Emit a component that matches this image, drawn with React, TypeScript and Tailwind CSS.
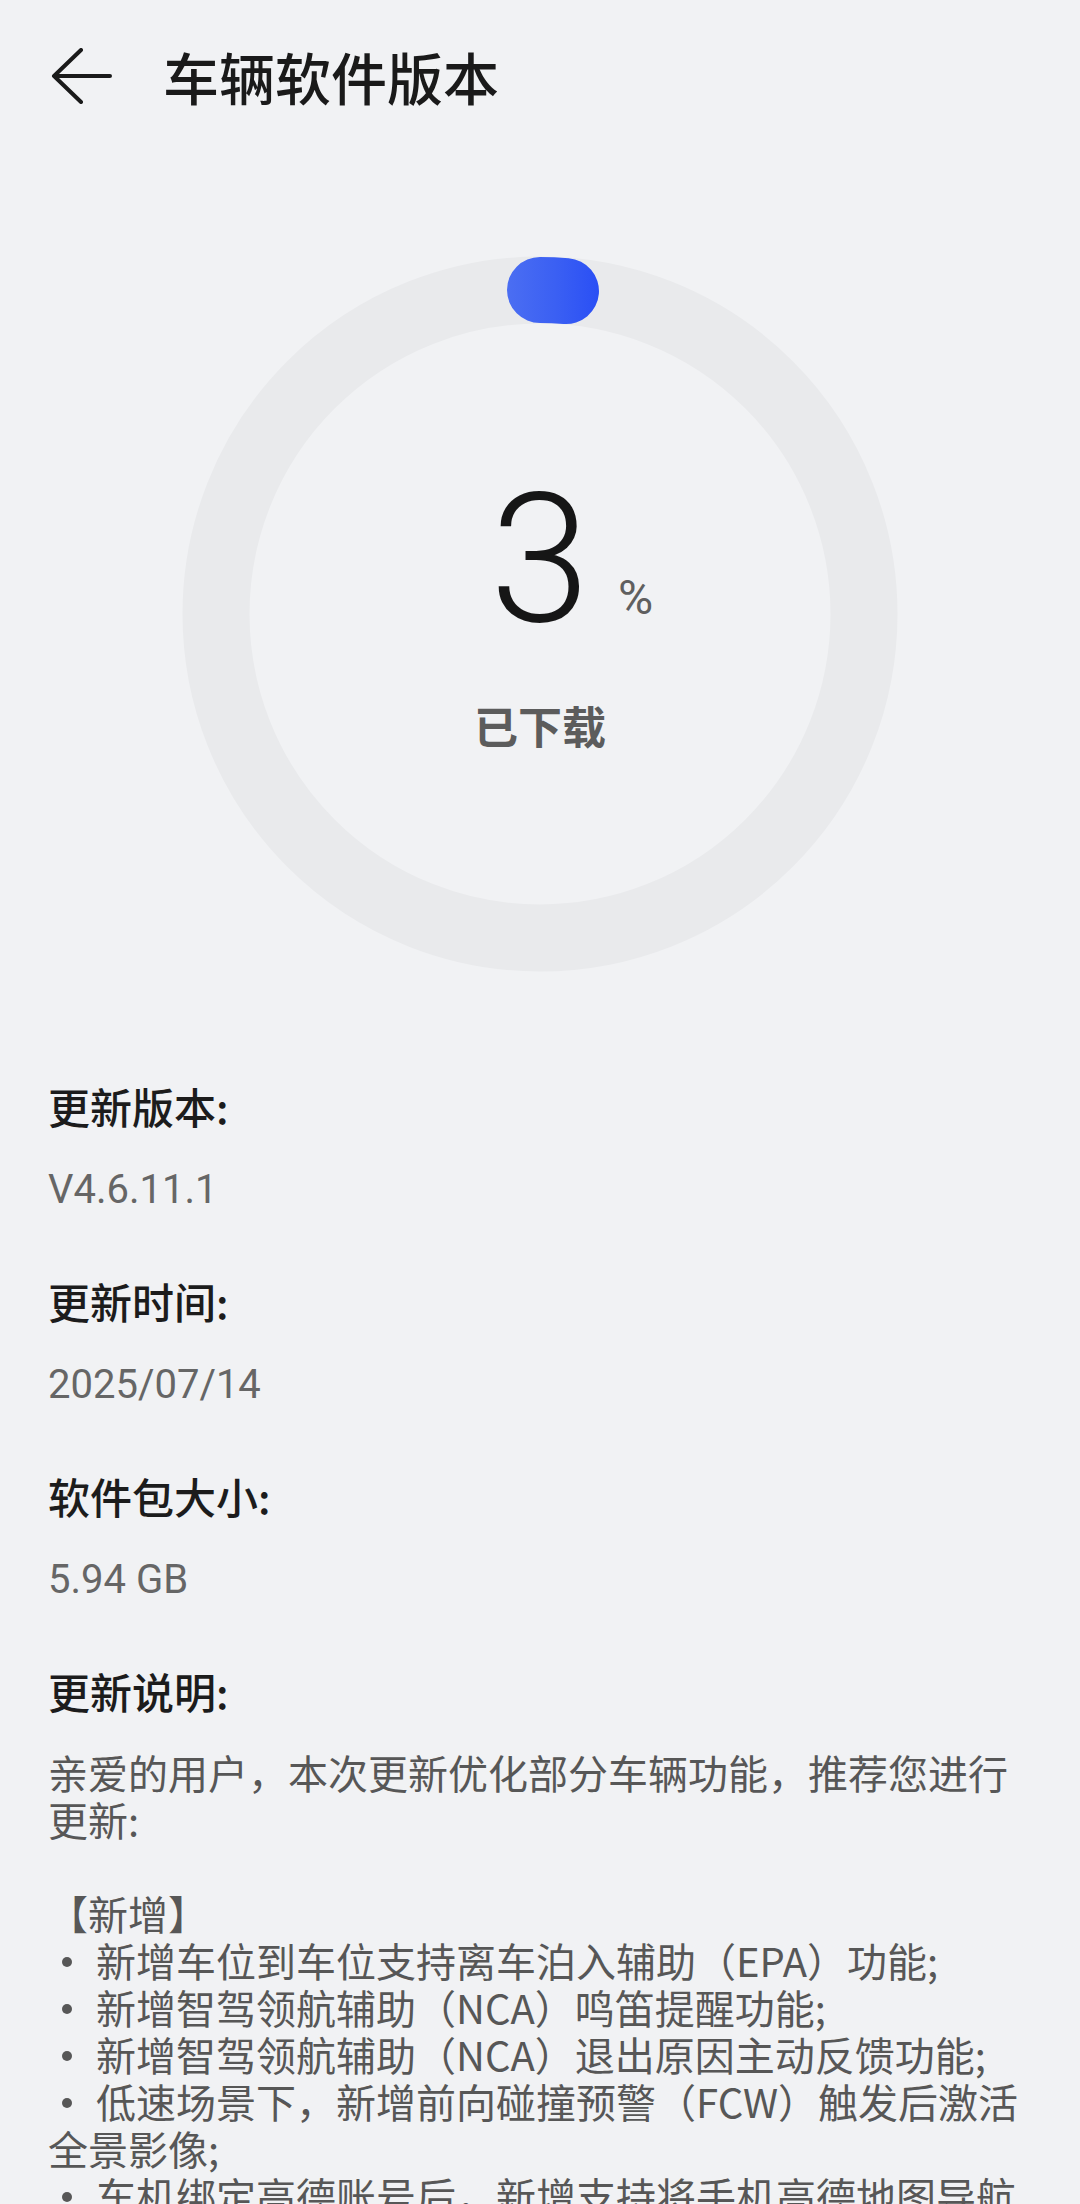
import React from "react";

const cjk = { fontFamily: '"Noto Sans CJK SC", "Noto Sans", sans-serif' };
const num = { fontFamily: 'Roboto, "Noto Sans CJK SC", sans-serif' };

const infoRows = [
  { label: "更新版本:", value: "V4.6.11.1" },
  { label: "更新时间:", value: "2025/07/14" },
  { label: "软件包大小:", value: "5.94 GB" },
];

const bullets = [
  "新增车位到车位支持离车泊入辅助（EPA）功能;",
  "新增智驾领航辅助（NCA）鸣笛提醒功能;",
  "新增智驾领航辅助（NCA）退出原因主动反馈功能;",
  "低速场景下，新增前向碰撞预警（FCW）触发后激活全景影像;",
  "车机绑定高德账号后，新增支持将手机高德地图导航信息流转至车机;",
];

function BackArrow() {
  return (
    <svg width="61" height="56" viewBox="0 0 61 56" fill="none">
      <path
        d="M30 2 L3 28 L30 54 M3 28 H59"
        stroke="#1a1a1a"
        strokeWidth="4"
        strokeLinecap="round"
        strokeLinejoin="round"
      />
    </svg>
  );
}

function ProgressRing() {
  // knob arc: from top, ~4.6deg clockwise
  const r = 324;
  const c = 358;
  const a = (4.6 * Math.PI) / 180;
  const ex = c + r * Math.sin(a);
  const ey = c - r * Math.cos(a);
  const d = `M${c} ${c - r} A${r} ${r} 0 0 1 ${ex} ${ey}`;
  return (
    <svg className="absolute inset-0" width="716" height="716" viewBox="0 0 716 716">
      <defs>
        <linearGradient id="knob" gradientUnits="userSpaceOnUse" x1="325" y1="0" x2="417" y2="0">
          <stop offset="0" stopColor="#4b6ef2" />
          <stop offset="0.55" stopColor="#3a5ff3" />
          <stop offset="1" stopColor="#2a4ff5" />
        </linearGradient>
        <filter id="glow" x="-50%" y="-50%" width="200%" height="200%">
          <feGaussianBlur stdDeviation="9" />
        </filter>
      </defs>
      <circle cx={c} cy={c} r={r} fill="none" stroke="#e9eaec" strokeWidth="67" />
      <path
        d={d}
        transform="translate(5 7)"
        fill="none"
        stroke="#5b7cff"
        strokeOpacity="0.5"
        strokeWidth="62"
        strokeLinecap="round"
        filter="url(#glow)"
      />
      <path d={d} fill="none" stroke="url(#knob)" strokeWidth="66" strokeLinecap="round" />
    </svg>
  );
}

export default function App() {
  return (
    <div className="h-[2204px] w-full overflow-hidden bg-[#f1f2f4]" style={cjk}>
      {/* header */}
      <div className="flex h-[152px] items-center pl-[51px]">
        <BackArrow />
        <h1 className="ml-[51px] text-[56px] leading-none font-medium text-[#1a1a1a]">
          车辆软件版本
        </h1>
      </div>

      {/* progress */}
      <div className="relative mx-auto mt-[104px] h-[716px] w-[716px]">
        <ProgressRing />
        <div className="relative flex flex-col items-center pt-[214px]">
          <span className="relative text-[180px] leading-none font-light text-[#161616]" style={num}>
            3
            <span
              className="absolute bottom-[28px] left-[calc(100%+28px)] text-[48px] leading-none font-normal text-[#5f5f5f]"
              style={num}
            >
              %
            </span>
          </span>
          <span className="mt-[53px] text-[44px] leading-none font-bold text-[#5c5c5c]">已下载</span>
        </div>
      </div>

      {/* info */}
      <div className="mt-[113px] flex flex-col gap-[70px] px-[48px]">
        {infoRows.map((row) => (
          <div key={row.label} className="flex flex-col gap-[43px]">
            <div className="text-[42px] leading-[42px] font-medium text-[#1c1c1c]">{row.label}</div>
            <div className="text-[40px] leading-[40px] text-[#666666]" style={num}>
              {row.value}
            </div>
          </div>
        ))}
        <div className="flex flex-col">
          <div className="text-[42px] leading-[42px] font-medium text-[#1c1c1c]">更新说明:</div>
          <div className="mt-[37px] text-[40px] leading-[47px] text-[#575757]">
            <p>亲爱的用户，本次更新优化部分车辆功能，推荐您进行更新:</p>
            <p className="mt-[47px]">【新增】</p>
            {bullets.map((b) => (
              <p key={b}>
                <span className="ml-[14px] mr-[24px] inline-block h-[10px] w-[10px] rounded-full bg-[#575757] align-[10px]" />
                {b}
              </p>
            ))}
          </div>
        </div>
      </div>
    </div>
  );
}
